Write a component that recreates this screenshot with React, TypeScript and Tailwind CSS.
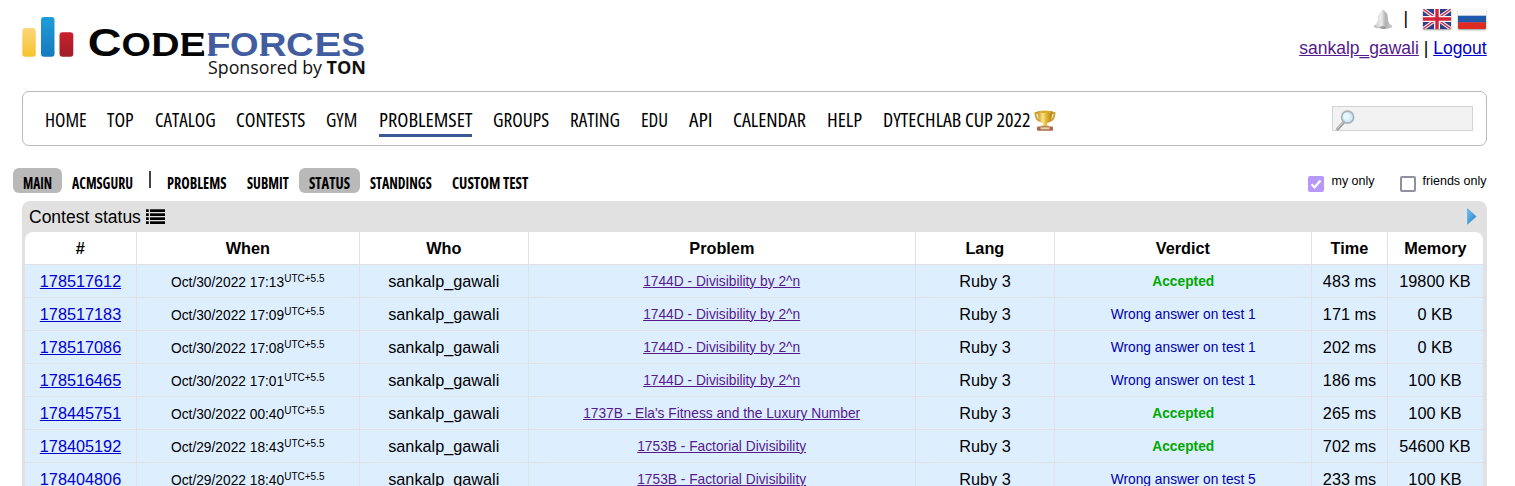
import { useLayoutEffect, useRef, useState } from "react";

const ARIAL = "font-['Liberation_Sans',Arial,sans-serif]";

// Condenses a label horizontally so that it fills the given width.
function Fit({ text, width }: { text: string; width: number }) {
  const ref = useRef<HTMLSpanElement>(null);
  const [scale, setScale] = useState(1);
  useLayoutEffect(() => {
    if (ref.current) setScale(width / ref.current.offsetWidth);
  }, [width, text]);
  return (
    <span className="block shrink-0" style={{ width }}>
      <span
        ref={ref}
        className="inline-block origin-left whitespace-nowrap align-top"
        style={{ transform: `scaleX(${scale})` }}
      >
        {text}
      </span>
    </span>
  );
}

// Wordmark letters: glyph, left and right ink edges, and whether the stem has serifs.
const LETTERS: [string, number, number, boolean][] = [
  ["C", 89.8, 120, false], ["O", 123, 149.3, false], ["D", 152.7, 178, true], ["E", 181, 203.8, true],
  ["F", 207.8, 229.5, true], ["O", 231.5, 257, false], ["R", 260, 286, true],
  ["C", 287.7, 312.5, false], ["E", 316, 339.5, true], ["S", 342.5, 363.7, false],
];

// Advance width, left and right ink edges of each glyph, in em.
const METRICS: Record<string, [number, number, number]> = {
  C: [0.722, 0.044, 0.69], O: [0.778, 0.041, 0.737], D: [0.722, 0.068, 0.68],
  E: [0.667, 0.068, 0.627], F: [0.611, 0.068, 0.58], R: [0.722, 0.068, 0.71], S: [0.667, 0.032, 0.628],
};

function Wordmark() {
  return (
    <g fontFamily="'Liberation Sans', Arial, sans-serif" fontWeight="700">
      {LETTERS.map(([ch, left, right, serif], i) => {
        const [adv, l, r] = METRICS[ch];
        const start = serif ? left + 1.5 : left;
        const length = ((right - start) * adv) / (r - l);
        return (
          <g key={i} fill={i < 4 ? "#050505" : "#425d9f"}>
            <text
              x={start - (length * l) / adv}
              y={55.6}
              fontSize={i === 0 ? 38 : 32.5}
              textLength={length}
              lengthAdjust="spacingAndGlyphs"
            >
              {ch}
            </text>
            {serif && <rect x={left} y={33.2} width={8} height={1.5} />}
            {serif && <rect x={left} y={54.1} width={ch === "F" || ch === "R" ? 9.5 : 8} height={1.5} />}
            {ch === "E" && <rect x={right - 2} y={50.5} width={2} height={5} />}
            {(ch === "E" || ch === "F") && <rect x={right - 2.5} y={33.2} width={2} height={5.5} />}
          </g>
        );
      })}
    </g>
  );
}

function Logo() {
  return (
    <svg width="350" height="70" viewBox="20 12 350 70" className="block">
      <defs>
        <linearGradient id="ly" x1="0" y1="0" x2="0" y2="1">
          <stop offset="0" stopColor="#fcd77c" />
          <stop offset="1" stopColor="#f6c22d" />
        </linearGradient>
        <linearGradient id="lb" x1="0" y1="0" x2="0" y2="1">
          <stop offset="0" stopColor="#209cd9" />
          <stop offset="1" stopColor="#147abd" />
        </linearGradient>
        <linearGradient id="lr" x1="0" y1="0" x2="0" y2="1">
          <stop offset="0" stopColor="#c9202b" />
          <stop offset="1" stopColor="#9d1f2a" />
        </linearGradient>
      </defs>
      <rect x="22.3" y="28" width="13.5" height="28.8" rx="3" fill="url(#ly)" />
      <rect x="41" y="17" width="13.5" height="39.8" rx="3" fill="url(#lb)" />
      <rect x="59.5" y="32.3" width="13.8" height="24.5" rx="3" fill="url(#lr)" />
      <Wordmark />
      <g fontFamily="'Open Sans', sans-serif" fontSize="18.5" fill="#111">
        <text x="208" y="73.5" textLength="114" lengthAdjust="spacingAndGlyphs">Sponsored by</text>
        <text x="326.500" y="73.5" fontWeight="700" textLength="39.5" lengthAdjust="spacingAndGlyphs">TON</text>
      </g>
    </svg>
  );
}

function Bell() {
  return (
    <svg width="20" height="21" viewBox="0 0 20 21">
      <defs>
        <linearGradient id="bell" x1="0" x2="1">
          <stop offset="0" stopColor="#c4c4c4" />
          <stop offset=".4" stopColor="#ededed" />
          <stop offset=".65" stopColor="#b0b0b0" />
          <stop offset="1" stopColor="#d2d2d2" />
        </linearGradient>
      </defs>
      <path d="M10 .8c1.2 0 1.800.8 1.700 1.800 2.300 1 3 3 3.200 6 .3 4.500 1 6 4.500 8.700 0 1.700-4 2.700-9.400 2.700s-9.400-1-9.400-2.700c3.500-2.700 4.200-4.200 4.500-8.700.2-3 .9-5 3.200-6C8.200 1.600 8.800.8 10 .8z" fill="url(#bell)" />
      <path d="M1 17c3 1.700 15 1.700 18 0" stroke="#bdbdbd" strokeWidth="1" fill="none" />
      <ellipse cx="10" cy="18.600" rx="3" ry="1.300" fill="#999" />
    </svg>
  );
}

function FlagUK() {
  return (
    <svg width="28" height="20" viewBox="0 0 28 20" className="rounded-[1px] shadow-[0_1px_2px_#999]">
      <rect width="28" height="20" fill="#2e3f88" />
      <path d="M0 0l28 20M28 0L0 20" stroke="#e8dfe8" strokeWidth="3.600" />
      <path d="M0 0l28 20M28 0L0 20" stroke="#d0324a" strokeWidth="1.400" />
      <path d="M14 0v20M0 10h28" stroke="#fbf5f6" strokeWidth="6" />
      <path d="M14 0v20M0 10h28" stroke="#d42439" strokeWidth="3.400" />
    </svg>
  );
}

function FlagRU() {
  return (
    <svg width="28" height="20" viewBox="0 0 28 20" className="rounded-[1px] shadow-[0_1px_2px_#999]">
      <rect width="28" height="20" fill="#f8f8f8" />
      <rect y="6.700" width="28" height="7" fill="#1f58ab" />
      <rect y="13.300" width="28" height="6.700" fill="#dd2a22" />
    </svg>
  );
}

function Trophy() {
  return (
    <svg width="22" height="22" viewBox="0 0 22 22" className="block">
      <defs>
        <linearGradient id="cup" x1="0" x2="1">
          <stop offset="0" stopColor="#c9961f" />
          <stop offset=".35" stopColor="#fbe58a" />
          <stop offset=".6" stopColor="#e2b432" />
          <stop offset="1" stopColor="#b17c17" />
        </linearGradient>
      </defs>
      <path d="M5 3H1.500c0 5 2.500 8 6.500 8.500M17 3h3.500c0 5-2.500 8-6.500 8.500" fill="none" stroke="#d0a030" strokeWidth="1.900" />
      <path d="M3.500 1h15c0 7-2 11-5.500 12.500v3H9v-3C5.500 12 3.500 8 3.500 1z" fill="url(#cup)" />
      <ellipse cx="11" cy="1.800" rx="7.500" ry="1.200" fill="#d9ab37" />
      <path d="M7.500 15.500h7l1.500 2.500H6z" fill="#d5a94a" />
      <rect x="3" y="16.500" width="16" height="4.300" rx="1" fill="#a9694a" />
      <rect x="6.500" y="17.300" width="9" height="2" fill="#e8d0a8" />
    </svg>
  );
}

function Magnifier() {
  return (
    <svg width="19" height="21" viewBox="0 0 19 21" className="block">
      <path d="M7.500 12.500L1.800 18.800" stroke="#9a9a9a" strokeWidth="3.200" strokeLinecap="round" />
      <path d="M7 12.500L1.500 18.300" stroke="#cacaca" strokeWidth="1.200" strokeLinecap="round" />
      <circle cx="11.600" cy="7.200" r="6" fill="#cdebf9" stroke="#abb0b4" strokeWidth="1.700" />
      <circle cx="10.500" cy="6.400" r="3.300" fill="#e6f7fe" />
    </svg>
  );
}

const MENU: [string, number][] = [
  ["HOME", 42], ["TOP", 26.5], ["CATALOG", 60.5], ["CONTESTS", 69], ["GYM", 31.500],
  ["PROBLEMSET", 93], ["GROUPS", 56], ["RATING", 50], ["EDU", 27.500], ["API", 23.500],
  ["CALENDAR", 72.500], ["HELP", 35.500], ["DYTECHLAB CUP 2022", 147.500],
];

const SUBMENU: [string, number][] = [
  ["MAIN", 29], ["ACMSGURU", 61], ["|", 0], ["PROBLEMS", 59.500], ["SUBMIT", 42],
  ["STATUS", 41], ["STANDINGS", 62], ["CUSTOM TEST", 76.500],
];

const HEAD = ["#", "When", "Who", "Problem", "Lang", "Verdict", "Time", "Memory"];
const COLS = "grid grid-cols-[111px_223px_169px_387px_139px_257px_76px_96px]";
const CELL = "flex items-center justify-center border-b border-[#e1e1e1] whitespace-nowrap not-last:border-l first:border-l-0 last:border-l";
const SMALL = "text-[13.750px] pt-[2px]";

const ROWS = [
  ["178517612", "Oct/30/2022 17:13", "1744D - Divisibility by 2^n", "Accepted", "483 ms", "19800 KB"],
  ["178517183", "Oct/30/2022 17:09", "1744D - Divisibility by 2^n", "Wrong answer on test 1", "171 ms", "0 KB"],
  ["178517086", "Oct/30/2022 17:08", "1744D - Divisibility by 2^n", "Wrong answer on test 1", "202 ms", "0 KB"],
  ["178516465", "Oct/30/2022 17:01", "1744D - Divisibility by 2^n", "Wrong answer on test 1", "186 ms", "100 KB"],
  ["178445751", "Oct/30/2022 00:40", "1737B - Ela's Fitness and the Luxury Number", "Accepted", "265 ms", "100 KB"],
  ["178405192", "Oct/29/2022 18:43", "1753B - Factorial Divisibility", "Accepted", "702 ms", "54600 KB"],
  ["178404806", "Oct/29/2022 18:40", "1753B - Factorial Divisibility", "Wrong answer on test 5", "233 ms", "100 KB"],
];

export default function App() {
  return (
    <div className={`h-[486px] w-[1515px] overflow-hidden bg-white text-black ${ARIAL}`}>
      <header className="flex h-[91px] justify-between pl-5 pr-7">
        <div className="pt-3"><Logo /></div>
        <div className="flex flex-col items-end text-[17.500px]">
          <div className="flex h-[38px] items-center">
            <Bell />
            <span className="ml-[10.500px] mr-[15px] leading-5 pb-[3px]">|</span>
            <FlagUK />
            <span className="w-[7px]" />
            <FlagRU />
            <span className="w-px" />
          </div>
          <div className="pr-[0.300px] leading-5">
            <a className="text-[#551a8b] underline">sankalp_gawali</a> | <a className="text-[#0000cc] underline">Logout</a>
          </div>
        </div>
      </header>

      <nav className="ml-[22px] flex h-[55px] w-[1465px] items-start rounded-[7px] border border-[#b9b9b9] pl-[21.500px] pr-[13px]">
        <div className="flex gap-[20.950px] pt-[14px] font-['Open_Sans',sans-serif] text-[20px] font-medium leading-[28px] font-stretch-75%">
          {MENU.map(([t, w]) => (
            <div key={t} className={t === "PROBLEMSET" ? "h-[31px] border-b-3 border-[#3b5998]" : "h-[31px]"}>
              <Fit text={t} width={w} />
            </div>
          ))}
        </div>
        <div className="ml-[3px] pt-[18px]"><Trophy /></div>
        <div className="ml-auto mt-[14px] h-[25px] w-[141px] border border-[#d3d3d3] bg-[#f2f2f2] pl-[3px] pt-[3px]">
          <Magnifier />
        </div>
      </nav>

      <div className="flex h-[55px] items-start justify-between pl-[13px] pr-7 pt-[22px]">
        <div className="flex font-['Open_Sans',sans-serif] text-[15.600px] font-bold leading-[31px] font-stretch-75%">
          {SUBMENU.map(([t, w]) =>
            t === "|" ? (
              <span key={t} className="mx-[6px] mt-[3px] h-[17px] w-[2px] bg-[#444]" />
            ) : (
              <div key={t} className={t === "MAIN" || t === "STATUS" ? "h-[25px] rounded-[6px] bg-[#b9b9b9] px-[10px]" : "h-[25px] px-[10px]"}>
                <Fit text={t} width={w} />
              </div>
            ),
          )}
        </div>
        <div className="flex pr-[0.500px] pt-[4px] text-[12.500px] leading-[18px]">
          <svg width="16" height="16" viewBox="0 0 16 16" className="mr-[7px] mt-1">
            <rect width="16" height="16" rx="2" fill="#b897fb" />
            <path d="M3.500 8.300l3 3 6-6.800" fill="none" stroke="#fff" strokeWidth="2.300" />
          </svg>
          my only
          <span className="ml-[25px] mr-[7px] mt-1 size-4 rounded-[2px] border-2 border-[#8f8f9d] bg-white" />
          friends only
        </div>
      </div>

      <section className="ml-[22px] w-[1465px] rounded-t-[8px] bg-[#e1e1e1] px-[3px]">
        <div className="flex h-[31px] items-center pl-1 text-[17.500px]">
          <span className="pt-[2px]">Contest status</span>
          <svg width="19" height="16" viewBox="0 0 19 16" className="ml-[5px] mt-px">
            {[0, 4, 8, 12].map((y) => (
              <g key={y}>
                <rect y={y + 0.3} width="2.800" height="2.700" />
                <rect x="4" y={y + 0.3} width="15" height="2.700" />
              </g>
            ))}
          </svg>
          <svg width="10" height="17" viewBox="0 0 10 17" className="ml-auto mr-[7px]">
            <defs>
              <linearGradient id="arr" x1="0" y1="0" x2="1" y2="1">
                <stop offset="0" stopColor="#7cc6ef" />
                <stop offset="1" stopColor="#1678c8" />
              </linearGradient>
            </defs>
            <path d="M.6.8v15.400L9.200 8.500z" fill="url(#arr)" stroke="#4a9fd8" strokeWidth=".7" />
          </svg>
        </div>
        <div className="w-[1458px] overflow-hidden rounded-t-[8px] bg-white">
          <div className={`${COLS} h-[33px] text-[16.250px] font-bold`}>
            {HEAD.map((h) => <div key={h} className={`${CELL} pr-[0.300px]`}>{h}</div>)}
          </div>
          {ROWS.map(([id, when, problem, verdict, time, memory]) => (
            <div key={id} className={`${COLS} h-[33px] bg-[#ddeeff] text-[16.250px]`}>
              <div className={CELL}><a className="text-[#0000cc] underline">{id}</a></div>
              <div className={`${CELL} ${SMALL} pr-[0.500px]`}>
                <span className="pt-[3px]">{when}</span>
                <span className="pb-[7px] text-[10px]">UTC+5.5</span>
              </div>
              <div className={`${CELL} pr-[0.500px]`}>sankalp_gawali</div>
              <div className={`${CELL} ${SMALL} pr-[0.700px]`}><a className="text-[#551a8b] underline">{problem}</a></div>
              <div className={CELL}>Ruby 3</div>
              <div className={`${CELL} ${SMALL} pl-[0.500px] ${verdict === "Accepted" ? "font-bold text-[#00a900]" : "text-[#0000aa]"}`}>{verdict}</div>
              <div className={CELL}>{time}</div>
              <div className={`${CELL} pr-px`}>{memory}</div>
            </div>
          ))}
        </div>
      </section>
    </div>
  );
}
